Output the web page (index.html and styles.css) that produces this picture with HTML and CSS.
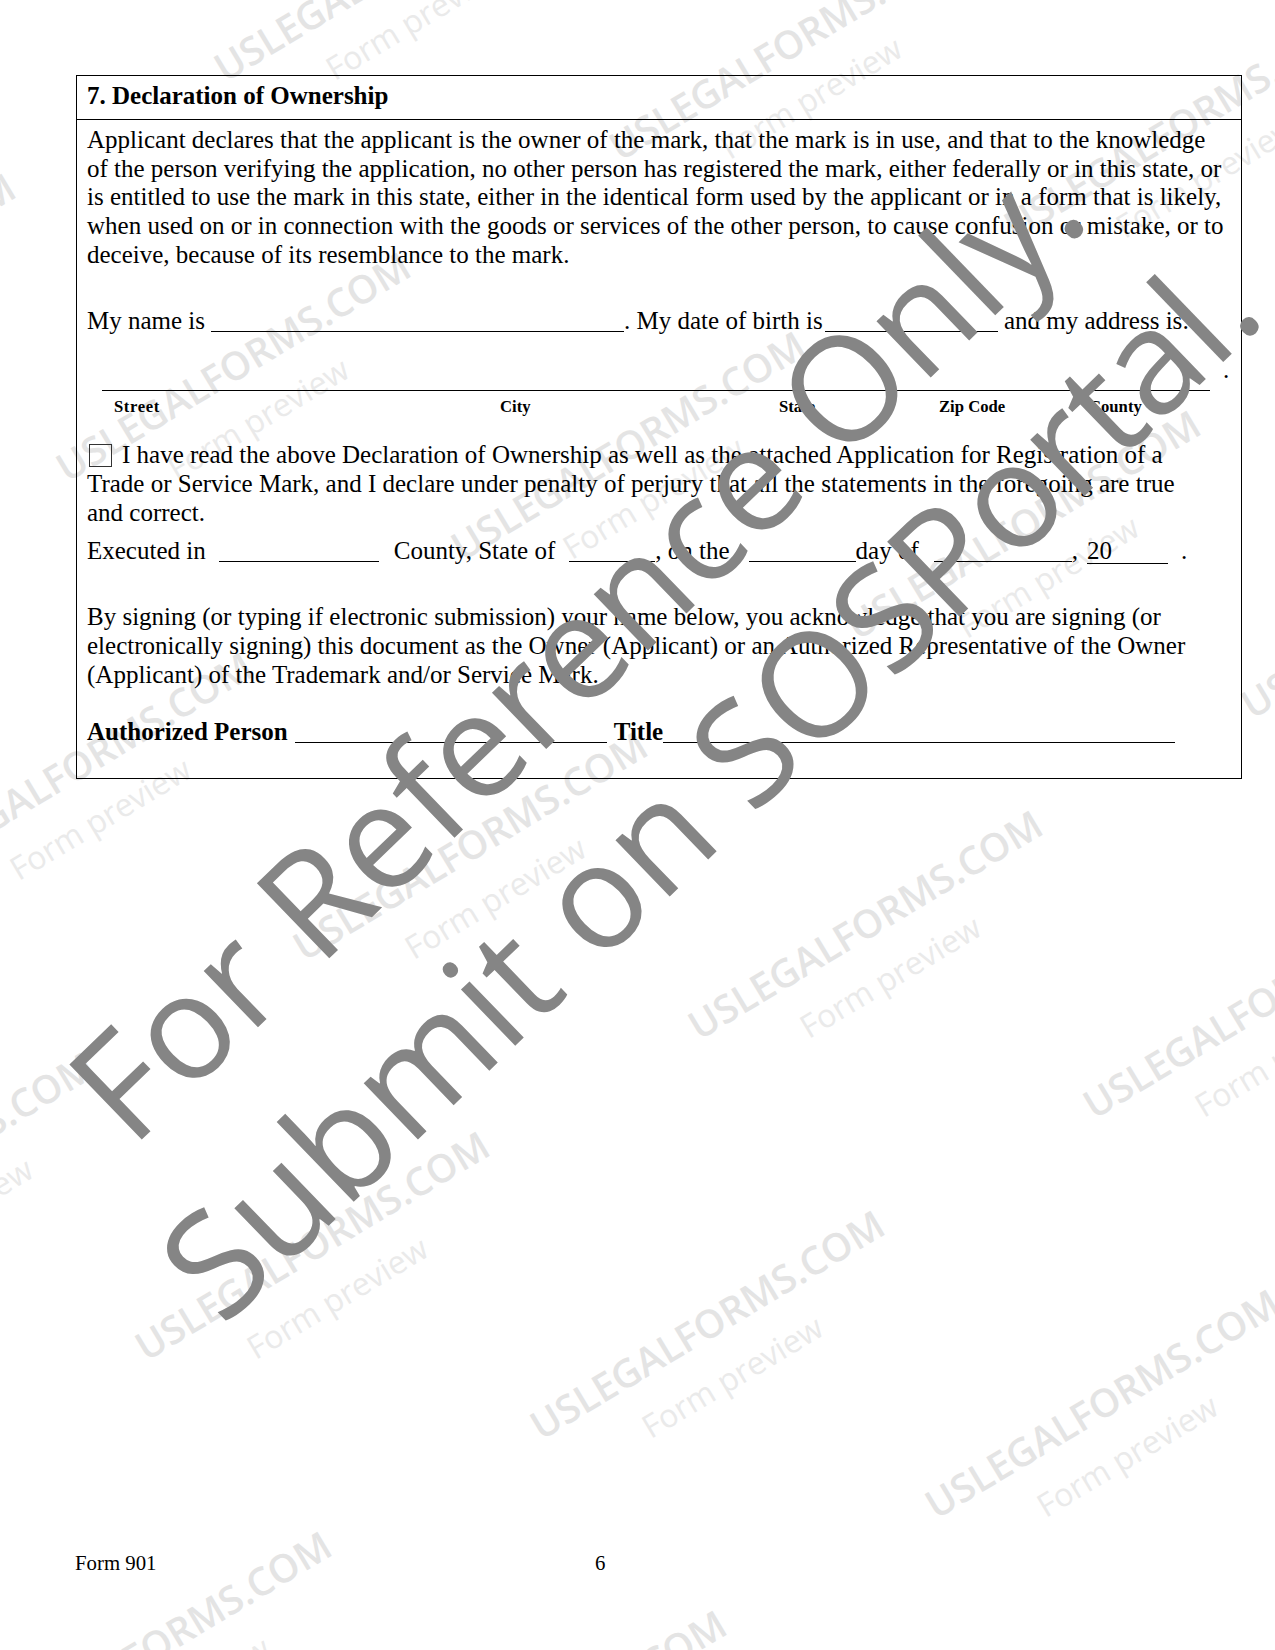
FILE: index.html
```html
<!DOCTYPE html>
<html lang="en">
<head>
    <meta charset="UTF-8" />
    <meta name="viewport" content="width=device-width, initial-scale=1" />
    <title>Form 901 - Declaration of Ownership</title>
    <link rel="stylesheet" href="styles.css">
</head>
<body>
<div class="page">
    <div class="watermarks">
        <div class="wm_tile" style="left:207px;top:53px"><div class="wm_brand">USLEGALFORMS.COM</div><div class="wm_sub">Form preview</div></div>
        <div class="wm_tile" style="left:602px;top:132px"><div class="wm_brand">USLEGALFORMS.COM</div><div class="wm_sub">Form preview</div></div>
        <div class="wm_tile" style="left:997px;top:211px"><div class="wm_brand">USLEGALFORMS.COM</div><div class="wm_sub">Form preview</div></div>
        <div class="wm_tile" style="left:-346px;top:374px"><div class="wm_brand">USLEGALFORMS.COM</div><div class="wm_sub">Form preview</div></div>
        <div class="wm_tile" style="left:49px;top:453px"><div class="wm_brand">USLEGALFORMS.COM</div><div class="wm_sub">Form preview</div></div>
        <div class="wm_tile" style="left:444px;top:532px"><div class="wm_brand">USLEGALFORMS.COM</div><div class="wm_sub">Form preview</div></div>
        <div class="wm_tile" style="left:839px;top:611px"><div class="wm_brand">USLEGALFORMS.COM</div><div class="wm_sub">Form preview</div></div>
        <div class="wm_tile" style="left:1234px;top:690px"><div class="wm_brand">USLEGALFORMS.COM</div><div class="wm_sub">Form preview</div></div>
        <div class="wm_tile" style="left:-109px;top:853px"><div class="wm_brand">USLEGALFORMS.COM</div><div class="wm_sub">Form preview</div></div>
        <div class="wm_tile" style="left:286px;top:932px"><div class="wm_brand">USLEGALFORMS.COM</div><div class="wm_sub">Form preview</div></div>
        <div class="wm_tile" style="left:681px;top:1011px"><div class="wm_brand">USLEGALFORMS.COM</div><div class="wm_sub">Form preview</div></div>
        <div class="wm_tile" style="left:1076px;top:1090px"><div class="wm_brand">USLEGALFORMS.COM</div><div class="wm_sub">Form preview</div></div>
        <div class="wm_tile" style="left:-267px;top:1253px"><div class="wm_brand">USLEGALFORMS.COM</div><div class="wm_sub">Form preview</div></div>
        <div class="wm_tile" style="left:128px;top:1332px"><div class="wm_brand">USLEGALFORMS.COM</div><div class="wm_sub">Form preview</div></div>
        <div class="wm_tile" style="left:523px;top:1411px"><div class="wm_brand">USLEGALFORMS.COM</div><div class="wm_sub">Form preview</div></div>
        <div class="wm_tile" style="left:918px;top:1490px"><div class="wm_brand">USLEGALFORMS.COM</div><div class="wm_sub">Form preview</div></div>
        <div class="wm_tile" style="left:-30px;top:1732px"><div class="wm_brand">USLEGALFORMS.COM</div><div class="wm_sub">Form preview</div></div>
        <div class="wm_tile" style="left:365px;top:1811px"><div class="wm_brand">USLEGALFORMS.COM</div><div class="wm_sub">Form preview</div></div>
    </div>

    <section class="form_box">
        <div class="box_head">7. Declaration of Ownership</div>
        <div class="box_body">
            <p class="para">Applicant declares that the applicant is the owner of the mark, that the mark is in use, and that to the knowledge<br>of the person verifying the application, no other person has registered the mark, either federally or in this state, or<br>is entitled to use the mark in this state, either in the identical form used by the applicant or in a form that is likely,<br>when used on or in connection with the goods or services of the other person, to cause confusion or mistake, or to<br>deceive, because of its resemblance to the mark.</p>

            <p class="row name_row">My name is<span class="blank w_name"></span>. My date of birth is<span class="blank w_dob"></span> and my address is:</p>

            <p class="row addr_row"><span class="addr_line"></span><span class="addr_dot">.</span></p>
            <div class="addr_labels">
                <span class="spaced">Street</span>
                <span>City</span>
                <span>State</span>
                <span>Zip Code</span>
                <span>County</span>
            </div>

            <p class="para check_para"><span class="checkbox"></span>I have read the above Declaration of Ownership as well as the attached Application for Registration of a<br>Trade or Service Mark, and I declare under penalty of perjury that all the statements in the foregoing are true<br>and correct.</p>

            <p class="row exec_row">Executed in<span class="blank w_county"></span>County, State of<span class="blank w_state"></span>, on the<span class="blank w_day"></span>day of<span class="blank w_month"></span>,<span class="blank w_year">20</span><span class="end_dot">.</span></p>

            <p class="para sign_para">By signing (or typing if electronic submission) your name below, you acknowledge that you are signing (or<br>electronically signing) this document as the Owner (Applicant) or an Authorized Representative of the Owner<br>(Applicant) of the Trademark and/or Service Mark.</p>

            <p class="row sign_row">Authorized Person<span class="blank w_person"></span>Title<span class="blank w_title"></span></p>
        </div>
    </section>

    <footer class="page_foot">
        <span class="form_no">Form 901</span>
        <span class="page_no">6</span>
    </footer>

    <div class="stamp">
        <div>For Reference Only.</div>
        <div>Submit on SOSPortal.</div>
    </div>
</div>
</body>
</html>
```

FILE: styles.css
```css
body, html {
    margin: 0;
    padding: 0;
    background-color: #fff;
}
.page {
    position: relative;
    width: 1275px;
    height: 1650px;
    overflow: hidden;
    display: flex;
    flex-direction: column;
    font-family: "Liberation Serif", "Times New Roman", serif;
    font-size: 25px;
    line-height: 28.75px;
    color: #000;
}

/* light repeating watermark */
.watermarks {
    position: absolute;
    top: 0;
    left: 0;
    width: 100%;
    height: 100%;
    z-index: 0;
}
.wm_tile {
    position: absolute;
    transform: rotate(-31deg);
    transform-origin: 0 0;
    font-family: "Open Sans", "DejaVu Sans", sans-serif;
    white-space: nowrap;
}
.wm_brand {
    font-size: 39px;
    line-height: 40px;
    font-weight: 600;
    color: #e4e4e4;
}
.wm_sub {
    font-size: 32px;
    line-height: 40px;
    margin-top: 18px;
    padding-left: 95px;
    color: #eaeaea;
}

/* form box */
.form_box {
    position: relative;
    z-index: 1;
    box-sizing: border-box;
    width: 1166px;
    margin: 75px 0 0 76px;
    border: 1.5px solid #000;
}
.box_head {
    padding: 6px 10px 8px 10px;
    font-weight: bold;
    border-bottom: 1.5px solid #000;
}
.box_body {
    padding: 0 10px 32px 10px;
}
.box_body p {
    margin: 0;
}
.para {
    margin-top: 6px !important;
    white-space: nowrap;
}
.row {
    white-space: nowrap;
}
.blank {
    display: inline-block;
    height: 0;
    border-bottom: 1.3px solid #000;
    vertical-align: -3px;
}
.name_row {
    margin-top: 37px !important;
}
.w_name {
    width: 413px;
    margin-left: 6px;
}
.w_dob {
    width: 173px;
    margin-left: 2px;
}
.addr_row {
    height: 36px;
    margin-top: 21px !important;
}
.addr_line {
    display: inline-block;
    width: 1108px;
    margin-left: 15px;
    border-bottom: 1.5px solid #000;
    vertical-align: -13px;
}
.addr_dot {
    margin-left: 13px;
}
.addr_labels {
    display: grid;
    grid-template-columns: 386px 279px 160px 150px auto;
    margin-top: 5px;
    padding-left: 27px;
    font-size: 16.67px;
    line-height: 19px;
    font-weight: bold;
}
.spaced {
    letter-spacing: 0.6px;
}
.check_para {
    margin-top: 25px !important;
}
.checkbox {
    display: inline-block;
    box-sizing: border-box;
    width: 23px;
    height: 23px;
    margin: 0 10px 0 2px;
    border: 1.3px solid #333;
    vertical-align: -4px;
}
.exec_row {
    margin-top: 9px !important;
}
.w_county {
    width: 160px;
    margin: 0 15px 0 13px;
}
.w_state {
    width: 86px;
    margin-left: 14px;
}
.w_day {
    width: 107px;
    margin-left: 19px;
}
.w_month {
    width: 138px;
    margin-left: 15px;
}
.w_year {
    height: auto;
    width: 81px;
    margin-left: 9px;
    line-height: 25px;
    vertical-align: baseline;
}
.end_dot {
    margin-left: 13px;
}
.sign_para {
    margin-top: 38px !important;
}
.sign_row {
    margin-top: 28px !important;
    font-weight: bold;
}
.w_person {
    width: 312px;
    margin: 0 7px;
}
.w_title {
    width: 512px;
}

/* footer */
.page_foot {
    position: relative;
    z-index: 1;
    display: flex;
    margin-top: auto;
    margin-bottom: 75px;
    padding-left: 75px;
    font-size: 20.8px;
    line-height: 24px;
}
.form_no {
    width: 520px;
}

/* big grey stamp */
.stamp {
    position: absolute;
    z-index: 2;
    left: -160px;
    top: 522px;
    width: 1600px;
    height: 384px;
    font-family: "Open Sans", "DejaVu Sans", sans-serif;
    font-size: 146px;
    line-height: 192px;
    color: #858585;
    text-align: center;
    white-space: nowrap;
    transform: rotate(-44deg);
    transform-origin: center;
}
```
